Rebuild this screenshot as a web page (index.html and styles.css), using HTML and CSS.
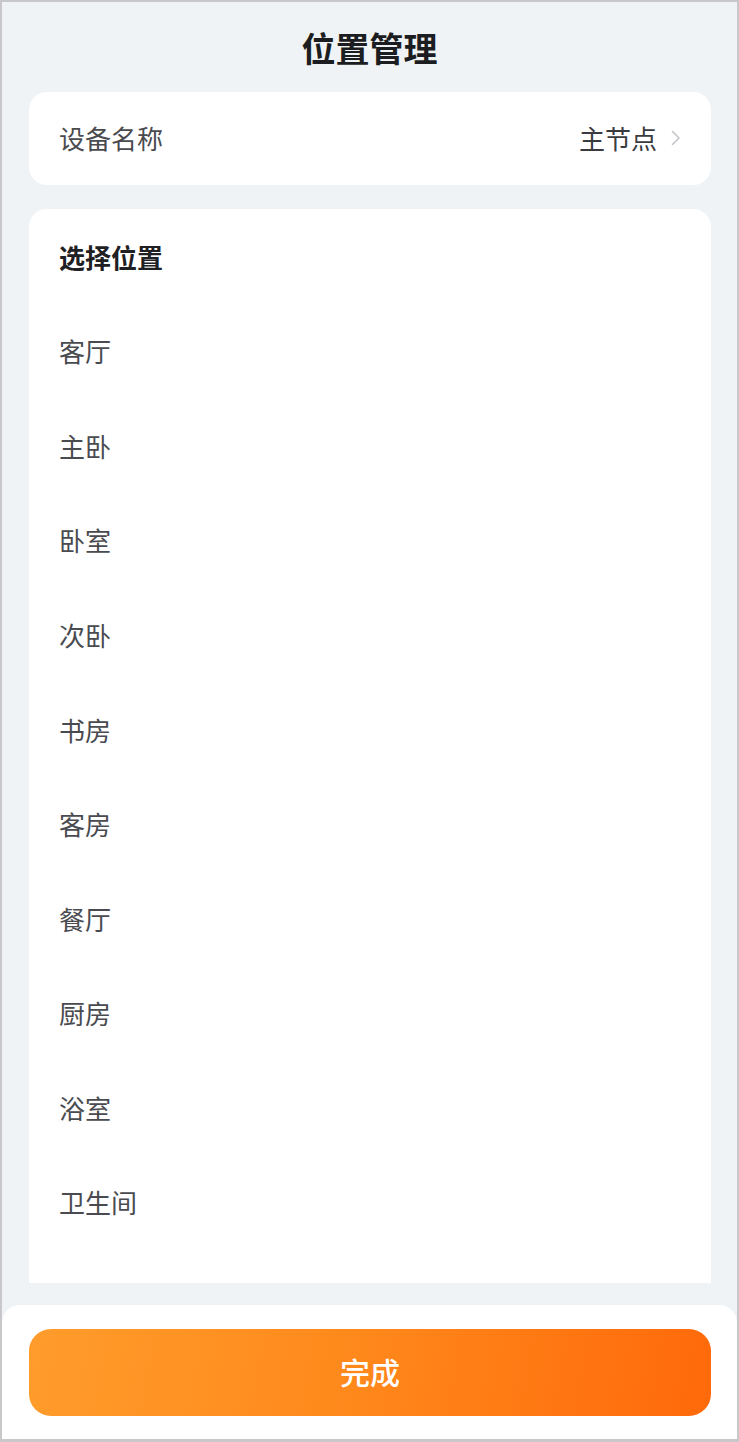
FILE: index.html
```html
<!DOCTYPE html>
<html lang="zh-CN">
<head>
<meta charset="utf-8">
<title>位置管理</title>
<link rel="stylesheet" href="styles.css">
</head>
<body>
<div class="screen">
  <header class="topbar"><h1 class="title">位置管理</h1></header>
  <main class="content">
    <section class="card name-card">
      <span class="label">设备名称</span>
      <span class="value">主节点
        <svg class="chevron" width="10" height="16" viewBox="0 0 10 16"><path d="M1.5 1.5 L8 8 L1.5 14.5" fill="none" stroke="#c4c6ca" stroke-width="1.6" stroke-linecap="round" stroke-linejoin="round"/></svg>
      </span>
    </section>
    <section class="card list-card">
      <div class="row row-head">选择位置</div>
      <div class="row">客厅</div>
      <div class="row">主卧</div>
      <div class="row">卧室</div>
      <div class="row">次卧</div>
      <div class="row">书房</div>
      <div class="row">客房</div>
      <div class="row">餐厅</div>
      <div class="row">厨房</div>
      <div class="row">浴室</div>
      <div class="row">卫生间</div>
    </section>
  </main>
  <footer class="footer">
    <button class="done-btn">完成</button>
  </footer>
</div>
</body>
</html>
```

FILE: styles.css
```css
* { box-sizing: border-box; }
html, body { margin: 0; padding: 0; }
body {
  font-family: "Noto Sans CJK SC", "Noto Sans", sans-serif;
  background: #ffffff;
}
.screen {
  width: 739px;
  height: 1442px;
  border: 2px solid #c8c8ca;
  border-bottom-width: 3px;
  background: #f0f3f6;
  display: flex;
  flex-direction: column;
  overflow: hidden;
}
.topbar {
  height: 90px;
  display: flex;
  align-items: center;
  justify-content: center;
  flex-shrink: 0;
}
.title {
  margin: 0;
  font-size: 34px;
  font-weight: 700;
  color: #1c1d20;
  line-height: 1;
  padding-top: 1px;
}
.content {
  flex: 1;
  min-height: 0;
  padding: 0 26px 0 27px;
  display: flex;
  flex-direction: column;
  gap: 24px;
  overflow: hidden;
}
.card {
  background: #ffffff;
  border-radius: 18px;
}
.name-card {
  height: 93px;
  flex-shrink: 0;
  display: flex;
  align-items: center;
  justify-content: space-between;
  padding: 0 30px 2px 30px;
  font-size: 26px;
  color: #4a4b4f;
}
.value {
  display: flex;
  align-items: center;
  gap: 14px;
  color: #3a3b3f;
}
.chevron { display: block; }
.list-card {
  flex: 1;
  min-height: 0;
  overflow: hidden;
  border-radius: 18px 18px 0 0;
  padding-top: 0;
  margin-bottom: 22px;
}
.row {
  height: 94.56px;
  display: flex;
  align-items: center;
  padding-left: 30px;
  font-size: 26px;
  color: #4a4b50;
}
.row-head {
  font-weight: 700;
  color: #1f2023;
}
.footer {
  flex-shrink: 0;
  height: 134px;
  background: #ffffff;
  border-radius: 18px 18px 0 0;
  padding: 24px 26px 0 27px;
}
.done-btn {
  width: 100%;
  height: 87px;
  border: 0;
  border-radius: 22px;
  background: linear-gradient(100deg, #ff9c2b 0%, #ff8a1c 45%, #ff690a 100%);
  color: #ffffff;
  font-family: "Noto Sans CJK SC", "Noto Sans", sans-serif;
  font-size: 30px;
  font-weight: 500;
  display: flex;
  align-items: center;
  justify-content: center;
  padding: 0 0 3px 0;
}
```
